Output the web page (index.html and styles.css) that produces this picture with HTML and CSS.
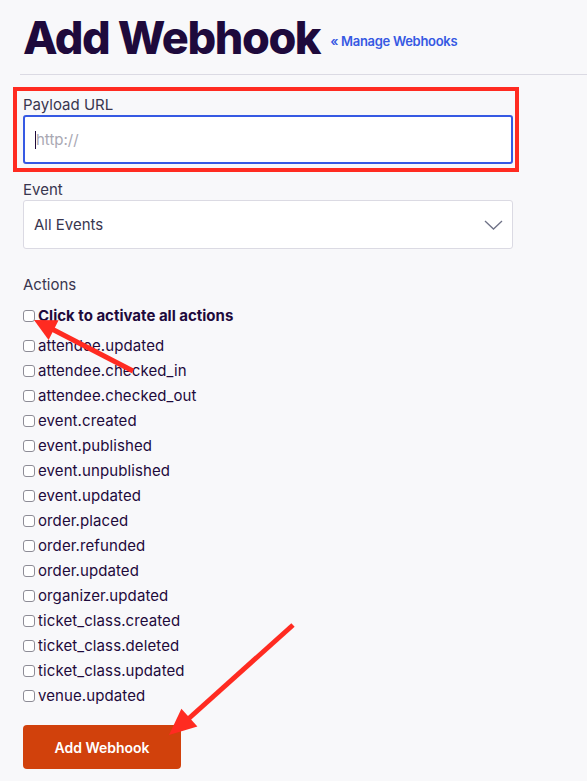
FILE: index.html
```html
<!DOCTYPE html>
<html lang="en">
<head>
<meta charset="utf-8">
<title>Add Webhook</title>
<link rel="stylesheet" href="styles.css">
</head>
<body>
<div class="page">
  <header class="header">
    <h1 class="title">Add Webhook</h1>
    <a class="back-link" href="#">« Manage Webhooks</a>
  </header>
  <div class="divider"></div>

  <form class="form">
    <div class="field highlight">
      <label class="label" for="url">Payload URL</label>
      <div class="input"><span class="caret"></span><span class="placeholder">http://</span></div>
    </div>

    <div class="field event-field">
      <label class="label">Event</label>
      <div class="select">
        <span>All Events</span>
        <svg class="chevron" width="19" height="10" viewBox="0 0 19 10"><path d="M1 1 L9.5 9 L18 1" fill="none" stroke="#6f7287" stroke-width="1.3"/></svg>
      </div>
    </div>

    <div class="field actions-field">
      <div class="label">Actions</div>
      <ul class="checks">
        <li class="check all"><span class="box"></span>Click to activate all actions</li>
        <li class="check"><span class="box"></span>attendee.updated</li>
        <li class="check"><span class="box"></span>attendee.checked_in</li>
        <li class="check"><span class="box"></span>attendee.checked_out</li>
        <li class="check"><span class="box"></span>event.created</li>
        <li class="check"><span class="box"></span>event.published</li>
        <li class="check"><span class="box"></span>event.unpublished</li>
        <li class="check"><span class="box"></span>event.updated</li>
        <li class="check"><span class="box"></span>order.placed</li>
        <li class="check"><span class="box"></span>order.refunded</li>
        <li class="check"><span class="box"></span>order.updated</li>
        <li class="check"><span class="box"></span>organizer.updated</li>
        <li class="check"><span class="box"></span>ticket_class.created</li>
        <li class="check"><span class="box"></span>ticket_class.deleted</li>
        <li class="check"><span class="box"></span>ticket_class.updated</li>
        <li class="check"><span class="box"></span>venue.updated</li>
      </ul>
    </div>

    <button class="submit" type="button">Add Webhook</button>
  </form>
</div>

<svg class="annotations" width="587" height="781" viewBox="0 0 587 781">
  <line x1="133" y1="371" x2="50" y2="328" stroke="#ff2b21" stroke-width="5"/>
  <polygon points="34,320 58.6,320.3 48.6,339.9" fill="#ff2b21"/>
  <line x1="293" y1="625" x2="186" y2="721" stroke="#ff2b21" stroke-width="5"/>
  <polygon points="169,735 197.4,726.6 181.4,708.8" fill="#ff2b21"/>
</svg>
</body>
</html>
```

FILE: styles.css
```css
* { box-sizing: border-box; }

html, body {
  margin: 0;
  padding: 0;
  background: #f8f8fa;
}

body {
  position: relative;
  width: 587px;
  min-height: 781px;
  overflow: hidden;
  font-family: Inter, "Noto Sans", sans-serif;
  color: #1e0a3c;
}

.page {
  padding-left: 23px;
  width: 513px;
}

.header {
  display: flex;
  align-items: flex-end;
  gap: 10px;
  padding-top: 15px;
  height: 60px;
  white-space: nowrap;
}

.title {
  margin: 0;
  font-size: 45px;
  line-height: 45px;
  font-weight: 800;
  letter-spacing: -1.4px;
  color: #1e0a3c;
}

.back-link {
  font-size: 13px;
  line-height: 16px;
  margin-bottom: 11px;
  font-weight: 600;
  letter-spacing: -0.3px;
  color: #3659e3;
  text-decoration: none;
}

.divider {
  height: 1px;
  background: #dbdae3;
  margin: 14px 0 0 -3px;
  width: 567px;
}

.form {
  display: flex;
  flex-direction: column;
}

.label {
  display: block;
  font-size: 15px;
  line-height: 20px;
  color: #39364f;
}

.highlight {
  margin: 12px -6px 0 -10px;
  border: 4px solid #ff2b21;
  padding: 4px 2px 4px 6px;
}

.input {
  display: flex;
  align-items: center;
  height: 49px;
  border: 2px solid #3659e3;
  border-radius: 3px;
  background: #fff;
  padding-left: 10px;
  font-size: 15px;
}

.caret {
  width: 1px;
  height: 18px;
  background: #1e0a3c;
}

.placeholder {
  color: #a9a8b3;
}

.event-field {
  margin-top: 8px;
}

.select {
  display: flex;
  align-items: center;
  justify-content: space-between;
  height: 49px;
  border: 1px solid #dbdae3;
  border-radius: 3px;
  background: #fff;
  padding: 0 9px 0 10px;
  font-size: 15px;
  color: #39364f;
}

.chevron {
  display: block;
}

.actions-field {
  margin-top: 26px;
}

.checks {
  list-style: none;
  margin: 8px 0 0;
  padding: 0;
}

.check {
  display: flex;
  align-items: center;
  height: 25px;
  font-size: 15px;
  color: #1e0a3c;
  letter-spacing: 0.1px;
}

.check.all {
  font-weight: 700;
  margin-bottom: 5px;
  letter-spacing: 0;
}

.box {
  flex: none;
  width: 12px;
  height: 12px;
  border: 1px solid #8d8c96;
  border-radius: 3px;
  background: #fff;
  margin-right: 3px;
}

.submit {
  align-self: flex-start;
  margin-top: 17px;
  width: 158px;
  height: 44px;
  border: none;
  border-radius: 4px;
  background: #d1410c;
  color: #fff;
  font-family: Inter, "Noto Sans", sans-serif;
  font-size: 14px;
  font-weight: 600;
}

.annotations {
  position: absolute;
  top: 0;
  left: 0;
  pointer-events: none;
}
```
